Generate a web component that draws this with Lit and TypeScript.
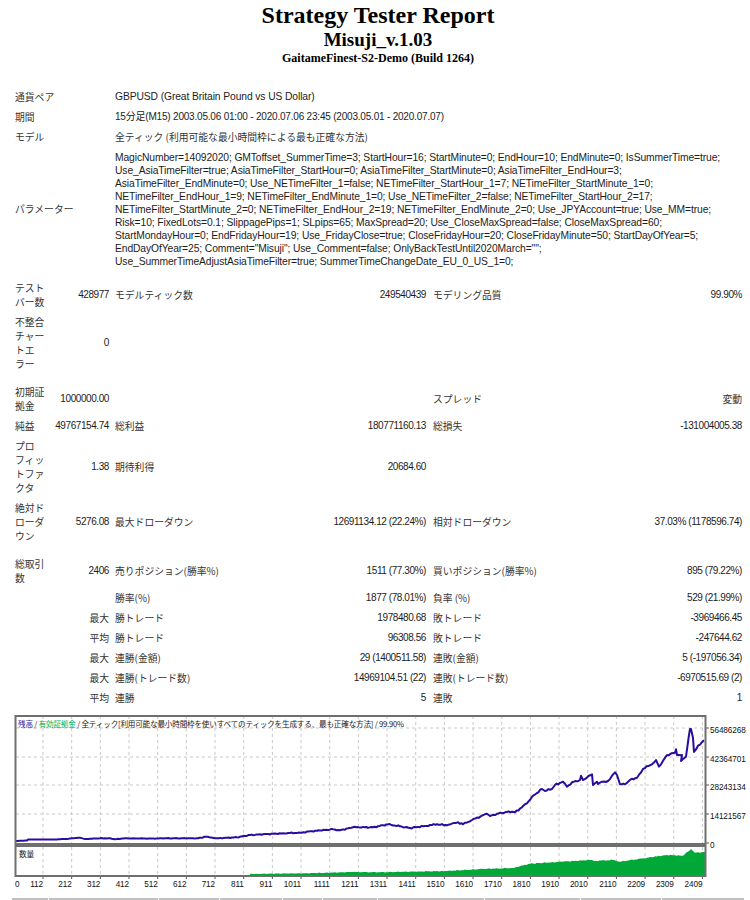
import { LitElement, html, css, svg } from "lit";
import { customElement } from "lit/decorators.js";

const PARAMS = [
  "MagicNumber=14092020; GMToffset_SummerTime=3; StartHour=16; StartMinute=0; EndHour=10; EndMinute=0; IsSummerTime=true;",
  "Use_AsiaTimeFilter=true; AsiaTimeFilter_StartHour=0; AsiaTimeFilter_StartMinute=0; AsiaTimeFilter_EndHour=3;",
  "AsiaTimeFilter_EndMinute=0; Use_NETimeFilter_1=false; NETimeFilter_StartHour_1=7; NETimeFilter_StartMinute_1=0;",
  "NETimeFilter_EndHour_1=9; NETimeFilter_EndMinute_1=0; Use_NETimeFilter_2=false; NETimeFilter_StartHour_2=17;",
  "NETimeFilter_StartMinute_2=0; NETimeFilter_EndHour_2=19; NETimeFilter_EndMinute_2=0; Use_JPYAccount=true; Use_MM=true;",
  "Risk=10; FixedLots=0.1; SlippagePips=1; SLpips=65; MaxSpread=20; Use_CloseMaxSpread=false; CloseMaxSpread=60;",
  "StartMondayHour=0; EndFridayHour=19; Use_FridayClose=true; CloseFridayHour=20; CloseFridayMinute=50; StartDayOfYear=5;",
  'EndDayOfYear=25; Comment="Misuji"; Use_Comment=false; OnlyBackTestUntil2020March="";',
  "Use_SummerTimeAdjustAsiaTimeFilter=true; SummerTimeChangeDate_EU_0_US_1=0;",
];

type Row = { h: string; c: string[]; gap?: string };
const ROWS: Row[] = [
  { h: "h34", c: ["テスト\nバー数", "428977", "モデルティック数", "249540439", "モデリング品質", "99.90%"] },
  { h: "h62", c: ["不整合\nチャー\nトエ\nラー", "0", "", "", "", ""] },
  { h: "h34", gap: "sp", c: ["初期証\n拠金", "1000000.00", "", "", "スプレッド", "変動"] },
  { h: "h20", c: ["純益", "49767154.74", "総利益", "180771160.13", "総損失", "-131004005.38"] },
  { h: "h62", c: ["プロ\nフィッ\nトファ\nクタ", "1.38", "期待利得", "20684.60", "", ""] },
  { h: "h48", c: ["絶対ド\nローダ\nウン", "5276.08", "最大ドローダウン", "12691134.12 (22.24%)", "相対ドローダウン", "37.03% (1178596.74)"] },
  { h: "h34", gap: "sp", c: ["総取引\n数", "2406", "売りポジション(勝率%)", "1511 (77.30%)", "買いポジション(勝率%)", "895 (79.22%)"] },
  { h: "h20", c: ["", "", "勝率(%)", "1877 (78.01%)", "負率 (%)", "529 (21.99%)"] },
  { h: "h20", c: ["", "最大", "勝トレード", "1978480.68", "敗トレード", "-3969466.45"] },
  { h: "h20", c: ["", "平均", "勝トレード", "96308.56", "敗トレード", "-247644.62"] },
  { h: "h20", c: ["", "最大", "連勝(金額)", "29 (1400511.58)", "連敗(金額)", "5 (-197056.34)"] },
  { h: "h20", c: ["", "最大", "連勝(トレード数)", "14969104.51 (22)", "連敗(トレード数)", "-6970515.69 (2)"] },
  { h: "h20", c: ["", "平均", "連勝", "5", "連敗", "1"] },
];

const LINE: number[][] = [
  [16, 841], [27, 840.5], [28, 839.5], [50, 839.5], [67, 839], [72, 838.3], [80, 837.7], [85, 839], [100, 838.3], [110, 838.3], [115, 839.3], [125, 838.3], [150, 838.6], [165, 838.3], [198, 838.3], [206, 836.7], [217, 838.3], [237, 837.3], [250, 835], [283, 833.3], [300, 832.7], [317, 830.7], [333, 829.3], [340, 830.3], [353, 827.3], [373, 827.3], [388, 824.3], [400, 826.3], [410, 828], [423, 826.3], [437, 824.3], [447, 825.3], [458, 822.3], [463, 824.3], [472, 820], [487, 813.7], [490, 816], [497, 813.7], [505, 812.3], [512, 811.7], [515, 812.3], [527, 803.3], [532, 796.7], [542, 789], [545, 791], [552, 789], [555, 785], [563, 781.7], [567, 786.7], [572, 782.3], [580, 780], [581, 775.7], [583, 780], [592, 774.3], [593, 785], [597, 781.7], [598, 784], [602, 781.7], [608, 781], [612, 775.7], [615, 772.3], [617, 775], [620, 784.3], [625, 784.3], [630, 780], [637, 777.7], [643, 769], [652, 764.3], [656, 760], [659, 766.7], [667, 755], [675, 752.7], [676, 749.3], [677, 755], [682, 755], [681, 761], [686, 756.7], [689, 735], [690, 729], [691, 729], [693, 738], [694, 752], [698, 745.7], [704, 740.3],
];
const AREA: number[][] = [
  [250, 874], [306, 873.3], [353, 872], [380, 872.3], [447, 871], [483, 869], [513, 868], [530, 863.7], [562, 861.7], [590, 860], [594, 861], [613, 860], [620, 861.7], [647, 857.7], [667, 855], [683, 855.7], [691, 849], [695, 852.7], [705, 852],
];
// Adds fine deterministic roughness between the traced points, like the real equity curve.
const rough = (a: number[][], amp: number) => {
  const out: number[][] = [];
  a.forEach((p, i) => {
    out.push(p);
    const n = a[i + 1];
    if (!n) return;
    const steps = Math.floor((n[0] - p[0]) / 1.6);
    for (let s = 1; s < steps; s++) {
      const t = s / steps;
      const x = p[0] + (n[0] - p[0]) * t;
      const k = Math.min(1, x / 500);
      const noise = Math.sin(x * 2.3) * Math.cos(x * 0.71) * amp * k;
      out.push([+x.toFixed(1), +(p[1] + (n[1] - p[1]) * t + noise).toFixed(1)]);
    }
  });
  return out;
};
const XLABELS = ["112", "212", "312", "412", "512", "612", "712", "811", "911", "1011", "1111", "1211", "1311", "1411", "1510", "1610", "1710", "1810", "1910", "2010", "2110", "2209", "2309", "2409"];
const YLABELS: [string, number][] = [["56486268", 728], ["42364701", 757], ["28243134", 785], ["14121567", 814], ["0", 843]];
const pts = (a: number[][]) => a.map((p) => p.join(",")).join(" ");
const tickX = (i: number) => 43 + i * 28.67;

@customElement("report-chart")
class ReportChart extends LitElement {
  static styles = css`
    :host { display: block; height: 188px; }
    svg { display: block; }
    .lab { font: 8.2px "Liberation Sans", sans-serif; fill: #111; }
    .leg { font: 7.6px "Noto Sans CJK JP", sans-serif; fill: #222; white-space: pre; }
    .blue { fill: #2a1aa8; }
    .green { fill: #00b050; }
    .grid { stroke: #c9c9c9; stroke-width: 1; stroke-dasharray: 3 3; }
    .frame { fill: none; stroke: #6f6f6f; stroke-width: 2; }
    .tick { stroke: #555; stroke-width: 1; }
    .line { fill: none; stroke: #2a0c9e; stroke-width: 2; stroke-linejoin: round; }
    .area { fill: #00a838; }
  `;
  render() {
    const area = [[250, 875], ...rough(AREA, 0.5), [705, 875]];
    return html`<svg width="750" height="188" viewBox="0 710 750 188">
      ${XLABELS.map((_, i) => svg`<line class="grid" x1=${tickX(i)} x2=${tickX(i)} y1="716" y2="843" /><line class="grid" x1=${tickX(i)} x2=${tickX(i)} y1="847" y2="875" /><line class="tick" x1=${tickX(i)} x2=${tickX(i)} y1="876" y2="879" />`)}
      ${YLABELS.slice(0, 4).map(([, y]) => svg`<line class="grid" x1="16" x2="705" y1=${y} y2=${y} />`)}
      ${YLABELS.map(([, y]) => svg`<line class="tick" x1="706" x2="709" y1=${y} y2=${y} />`)}
      <polygon class="area" points=${pts(area)} />
      <polyline class="line" points=${pts(rough(LINE, 0.9))} />
      <rect class="frame" x="15.5" y="716" width="690" height="128" />
      <rect class="frame" x="15.5" y="846" width="690" height="30" />
      <text class="leg" x="18" y="727" textLength="386" lengthAdjust="spacing"><tspan class="blue">残高</tspan> / <tspan class="green">有効証拠金</tspan> / 全ティック[利用可能な最小時間枠を使いすべてのティックを生成する、最も正確な方法] / 99.90%</text>
      <text class="leg" x="19" y="857">数量</text>
      <text class="lab" x="15" y="887">0</text>
      ${XLABELS.map((t, i) => svg`<text class="lab" x=${tickX(i)} y="887" text-anchor="end">${t}</text>`)}
      ${YLABELS.map(([t, y]) => svg`<text class="lab" x="710" y=${y + 5}>${t}</text>`)}
    </svg>`;
  }
}

@customElement("app-root")
export class AppRoot extends LitElement {
  static styles = css`
    :host { display: block; width: 750px; height: 900px; overflow: hidden; background: #fff; color: #1c1c1c; font: 10.3px/14px "Liberation Sans", "Noto Sans CJK JP", sans-serif; letter-spacing: -0.1px; }
    .head { padding: 1px 0 0 6px; text-align: center; font-family: "Liberation Serif", serif; font-weight: 700; color: #000; height: 87px; box-sizing: border-box; letter-spacing: 0; }
    .t1 { font-size: 24px; line-height: 28px; }
    .t2 { font-size: 19px; line-height: 21px; }
    .t3 { font-size: 12px; line-height: 16px; }
    .jp { font-family: "Noto Sans CJK JP", sans-serif; font-size: 9.8px; color: #333; letter-spacing: 0; }
    .wrap { white-space: pre-line; }
    .n { font-size: 10px; letter-spacing: -0.42px; }
    .info .period { font-size: 10px; letter-spacing: -0.2px; }
    .info { display: grid; grid-template-columns: 100px 1fr; padding-left: 15px; align-items: center; }
    .info > div { min-height: 20px; display: flex; align-items: center; white-space: nowrap; }
    .info > .params { display: block; padding: 4px 0 3px; line-height: 13px; min-height: 0; }
    .params div { height: 13px; }
    .stats { margin-top: 7px; display: grid; grid-template-columns: 31px 63px 6px 311px 7px 309px; padding-left: 15px; }
    .row { display: contents; }
    .row > div { display: flex; align-items: center; }
    .num { justify-content: flex-end; white-space: nowrap; }
    .pair { justify-content: space-between; white-space: nowrap; }
    .h20 > div { height: 20px; }
    .h34 > div { height: 34px; }
    .h48 > div { height: 48px; }
    .h62 > div { height: 62px; }
    .sp { grid-column: 1 / -1; height: 8px; }
    .chart { margin-top: 2px; }
    .strip { display: grid; grid-template-columns: 36px 109px 60px 62px 39px 54px 106px 95px 80px 82px; column-gap: 1px; padding-left: 12px; }
    .strip div { height: 2px; background: #c0c0c0; }
  `;
  private cell(v: string) {
    if (!v) return "";
    return /^[\d\-]/.test(v) ? html`<span class="n">${v}</span>` : html`<span class="jp">${v}</span>`;
  }
  render() {
    return html`
      <div class="head">
        <div class="t1">Strategy Tester Report</div>
        <div class="t2">Misuji_v.1.03</div>
        <div class="t3">GaitameFinest-S2-Demo (Build 1264)</div>
      </div>
      <div class="info">
        <div class="jp">通貨ペア</div><div>GBPUSD (Great Britain Pound vs US Dollar)</div>
        <div class="jp">期間</div><div class="period">15分足(M15) 2003.05.06 01:00 - 2020.07.06 23:45 (2003.05.01 - 2020.07.07)</div>
        <div class="jp">モデル</div><div class="jp">全ティック (利用可能な最小時間枠による最も正確な方法)</div>
        <div class="jp">パラメーター</div><div class="params">${PARAMS.map((p) => html`<div>${p}</div>`)}</div>
      </div>
      <div class="stats">
        ${ROWS.map((r) => html`
          ${r.gap ? html`<div class="sp"></div>` : ""}
          <div class="row ${r.h}">
            <div class="jp wrap">${r.c[0]}</div>
            <div class="num">${this.cell(r.c[1])}</div>
            <div></div>
            <div class="pair">${this.cell(r.c[2])}${this.cell(r.c[3])}</div>
            <div></div>
            <div class="pair">${this.cell(r.c[4])}${this.cell(r.c[5])}</div>
          </div>`)}
      </div>
      <div class="chart"><report-chart></report-chart></div>
      <div class="strip">${Array.from({ length: 10 }, () => html`<div></div>`)}</div>
    `;
  }
}
void ReportChart;
